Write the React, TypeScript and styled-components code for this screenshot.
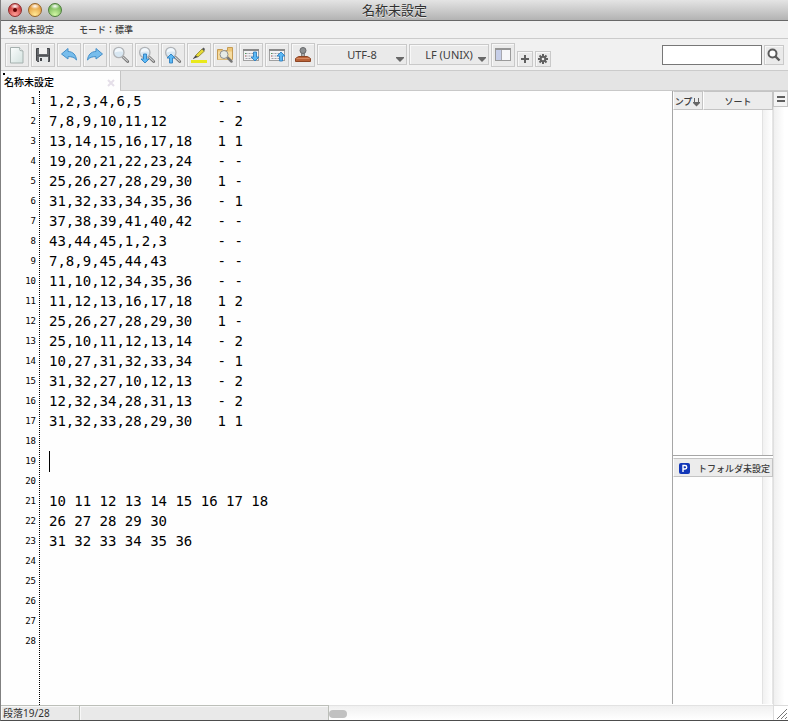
import React from "react";
import styled, { createGlobalStyle } from "styled-components";

const ui = `"Noto Sans", "Noto Sans CJK JP", sans-serif`;
const jp = `"Noto Sans CJK JP", sans-serif`;

const Global = createGlobalStyle`
  * { box-sizing: border-box; }
  html, body, #root { height: 100%; }
  body { margin: 0; background: #fff; font-family: ${jp}; }
  button, input, select, textarea { margin: 0; padding: 0; border-radius: 0; font: inherit; color: inherit; }
  svg { display: block; flex: none; }
`;

const Window = styled.div`
  display: flex;
  flex-direction: column;
  min-height: 100vh;
  background: #fefefe;
  border-left: 1px solid #808080;
  border-bottom: 1px solid #4d4d4d;
`;

const TitleBar = styled.header`
  display: grid;
  grid-template-columns: 1fr auto 1fr;
  align-items: center;
  height: 21px;
  padding: 0 7px;
  border-bottom: 1px solid #686868;
  background: linear-gradient(#e4e4e4, #b3b3b3);
`;

const Lights = styled.div`
  display: flex;
  gap: 6px;
`;

const Light = styled.button<{ $edge: string; $base: string; $glow: string }>`
  display: grid;
  place-items: center;
  width: 14px;
  height: 14px;
  border: 1px solid ${(p) => p.$edge};
  border-radius: 50%;
  background: radial-gradient(ellipse 5px 3px at 50% 18%, #fff, transparent),
    radial-gradient(circle at 50% 90%, ${(p) => p.$glow}, ${(p) => p.$base} 75%);
`;

const Dot = styled.span`
  width: 4px;
  height: 4px;
  border-radius: 50%;
  background: #5d0000;
`;

const Title = styled.h1`
  margin: 0;
  color: #303030;
  font-size: 13px;
  font-weight: 400;
  line-height: 20px;
  text-shadow: 0 1px 0 #e6e6e6;
`;

const MenuBar = styled.nav`
  display: flex;
  gap: 25px;
  height: 18px;
  padding: 0 8px;
  background: #f1f1f1;
  border-bottom: 1px solid #cbcbcb;
`;

const MenuItem = styled.button`
  border: 0;
  background: none;
  color: #3c3c3c;
  font-size: 9px;
  font-weight: 500;
  line-height: 18px;
`;

const ToolBar = styled.div`
  display: flex;
  align-items: center;
  gap: 2px;
  height: 32px;
  padding: 0 4px;
  background: #f1f1f1;
  border-bottom: 1px solid #cbcbcb;
`;

const ToolButton = styled.button`
  display: grid;
  flex: none;
  place-items: center;
  width: 24px;
  height: 24px;
  border: 1px solid #c9c9c9;
  background: #eaeaea;
  box-shadow: inset 1px 1px #f8f8f8;
`;

const SmallButton = styled(ToolButton)`
  align-self: flex-end;
  width: 16px;
  height: 16px;
  margin-bottom: 3px;
`;

const SearchButton = styled(ToolButton)`
  width: 20px;
  height: 20px;
`;

const SelectBox = styled.label<{ $width: number }>`
  position: relative;
  flex: 0 1 ${(p) => p.$width}px;
`;

const Select = styled.select`
  display: block;
  width: 100%;
  height: 21px;
  border: 1px solid #c9c9c9;
  background: #eaeaea;
  box-shadow: inset 1px 1px #f8f8f8;
  color: #404040;
  font-family: ${ui};
  font-size: 11px;
  text-align-last: center;
  appearance: none;
`;

const SelectArrow = styled.svg`
  position: absolute;
  right: 3px;
  bottom: 3px;
  pointer-events: none;
`;

const Search = styled.form`
  display: flex;
  gap: 2px;
  margin-left: auto;
`;

const SearchInput = styled.input`
  width: 100px;
  height: 20px;
  padding: 0 4px;
  border: 1px solid #777;
  background: #fff;
  font-size: 11px;
`;

const TabBar = styled.div`
  display: flex;
  height: 20px;
  background: #e4e4e4;
`;

const Tab = styled.div`
  display: flex;
  justify-content: space-between;
  width: 119px;
  background: #fefefe;
`;

const TabLabel = styled.button`
  position: relative;
  padding-left: 3px;
  border: 0;
  background: none;
  color: #000;
  font-size: 10px;
  font-weight: 500;
  line-height: 22px;
`;

const ModifiedMark = styled.span`
  position: absolute;
  top: 2px;
  left: 2px;
  width: 2px;
  height: 2px;
  background: #000;
`;

const TabClose = styled.button`
  display: grid;
  place-items: center;
  width: 19px;
  padding-top: 3px;
  border: 0;
  background: none;
`;

const TabRest = styled.div`
  flex: 1;
  border-left: 1px solid #c4c4c4;
  border-bottom: 1px solid #c8c8c8;
`;

const Workspace = styled.main`
  display: flex;
  flex: 1;
`;

const Editor = styled.section`
  display: flex;
  flex: 1;
  min-width: 0;
`;

const Gutter = styled.ol`
  flex: none;
  width: 39px;
  margin: 0;
  padding: 0 3px 0 0;
  border-right: 1px dotted #000;
  list-style: none;
  color: #000;
  font-family: "DejaVu Sans Mono", monospace;
  font-size: 9px;
  line-height: 20px;
  text-align: right;
`;

const Page = styled.div`
  position: relative;
  flex: 1;
`;

const TextArea = styled.textarea`
  display: block;
  width: 100%;
  height: 100%;
  padding: 0 9px;
  border: 0;
  outline: 0;
  background: transparent;
  color: #000;
  font-family: "DejaVu Sans Mono", monospace;
  font-size: 14px;
  line-height: 20px;
  white-space: pre;
  resize: none;
  overflow: hidden;
`;

const Caret = styled.span`
  position: absolute;
  top: 360px;
  left: 9px;
  width: 1px;
  height: 21px;
  background: #000;
`;

const SidePanel = styled.aside`
  display: flex;
  flex: none;
  flex-direction: column;
  width: 101px;
  margin-bottom: 1px;
  border-left: 1px solid #a6a6a6;
`;

const SideHead = styled.div`
  display: flex;
  height: 19px;
`;

const HeadCell = styled.button<{ $width?: number }>`
  display: flex;
  flex: ${(p) => (p.$width ? `0 0 ${p.$width}px` : "1")};
  align-items: center;
  justify-content: center;
  gap: 1px;
  min-width: 0;
  padding-top: 2px;
  overflow: hidden;
  border: 1px solid #c4c4c4;
  border-left-color: #fff;
  background: #ececec;
  color: #3c3c3c;
  font-size: 9px;
  font-weight: 500;
  line-height: 15px;
  white-space: nowrap;
`;

const ProjectCell = styled(HeadCell)`
  gap: 8px;
  padding-left: 3px;
`;

const ListArea = styled.div`
  display: flex;
  flex: 1;
  justify-content: flex-end;
`;

const TopList = styled(ListArea)`
  flex: 0 0 345px;
`;

const Track = styled.div`
  width: 11px;
  border-left: 1px solid #e2e2e2;
  border-right: 1px solid #e6e6e6;
  background: linear-gradient(90deg, #f1f1f1, #fff);
`;

const Splitter = styled.div`
  height: 3px;
  border-top: 1px solid #a6a6a6;
  background: #fff;
`;

const ScrollColumn = styled.div`
  display: flex;
  flex: none;
  flex-direction: column;
  width: 15px;
`;

const SplitButton = styled.button`
  display: grid;
  place-items: center;
  height: 16px;
  border: 1px solid #c4c4c4;
  background: #f4f4f4;
`;

const MainTrack = styled.div`
  flex: 1;
  border-left: 1px solid #e0e0e0;
  background: linear-gradient(90deg, #f0f0f0, #fff 75%);
`;

const StatusBar = styled.footer`
  display: flex;
  height: 15px;
`;

const StatusCell = styled.div<{ $width: number }>`
  flex: 0 0 ${(p) => p.$width}px;
  padding-left: 2px;
  border-top: 1px solid #bcbfb9;
  border-right: 1px solid #bcbfb9;
  background: #e9e9e9;
  box-shadow: inset 1px 1px #f8f8f8;
  color: #303030;
  font-family: ${ui};
  font-size: 10px;
  line-height: 15px;
`;

const HorizontalTrack = styled.div`
  display: flex;
  flex: 1;
  align-items: flex-end;
  padding-bottom: 2px;
  border-top: 1px solid #e2e2e2;
  background: linear-gradient(#f0f0f0, #fff);
`;

const Thumb = styled.div`
  width: 18px;
  height: 8px;
  border-radius: 4px;
  background: #c1c1c1;
`;

const Corner = styled.div`
  width: 15px;
  border-top: 1px solid #dcdcdc;
  border-left: 1px solid #dcdcdc;
  background: #fff;
`;

const lines = [
  "1,2,3,4,6,5         - -",
  "7,8,9,10,11,12      - 2",
  "13,14,15,16,17,18   1 1",
  "19,20,21,22,23,24   - -",
  "25,26,27,28,29,30   1 -",
  "31,32,33,34,35,36   - 1",
  "37,38,39,41,40,42   - -",
  "43,44,45,1,2,3      - -",
  "7,8,9,45,44,43      - -",
  "11,10,12,34,35,36   - -",
  "11,12,13,16,17,18   1 2",
  "25,26,27,28,29,30   1 -",
  "25,10,11,12,13,14   - 2",
  "10,27,31,32,33,34   - 1",
  "31,32,27,10,12,13   - 2",
  "12,32,34,28,31,13   - 2",
  "31,32,33,28,29,30   1 1",
  "",
  "",
  "",
  "10 11 12 13 14 15 16 17 18",
  "26 27 28 29 30",
  "31 32 33 34 35 36",
  "",
  "",
  "",
  "",
  "",
];

const Icon = ({ children }: { children: React.ReactNode }) => (
  <svg width="18" height="18" viewBox="0 0 18 18" aria-hidden="true">
    {children}
  </svg>
);

const Lens = () => (
  <>
    <path d="M11 11l4.700 4.500" stroke="#707070" strokeWidth="2.800" strokeLinecap="round" />
    <path d="M11 11l4.500 4.200" stroke="#d4d4d4" strokeWidth="1.100" strokeLinecap="round" />
    <circle cx="6.800" cy="6.500" r="5.200" fill="#d8e7f2" stroke="#b1b3b6" strokeWidth="1.300" />
    <path d="M2.800 6.600a4 4 0 0 1 8-.6c-2.500-.7-5-.5-8 .6z" fill="#f3f8fc" />
  </>
);

const Arrow = ({ up, x, y }: { up?: boolean; x: number; y: number }) => (
  <path
    d={up ? "M0 4 4 0 8 4H5.500V9H2.500V4z" : "M0 5 4 9 8 5H5.500V0H2.500V5z"}
    transform={`translate(${x} ${y})`}
    fill="#5cb9f5"
    stroke="#2f7fc0"
    strokeWidth=".9"
    strokeLinejoin="round"
  />
);

const Sheet = () => (
  <>
    <rect x="1.500" y="3.500" width="15" height="11" fill="#f2f2f4" stroke="#a0a0a0" />
    <path d="M1 4h16" stroke="#8a8a8a" strokeWidth="2" />
    <path d="M3.500 7.500h10M3.500 10h7M3.500 12.500h8" stroke="#a0a0a8" strokeDasharray="2 1" />
    <path d="M3 7.500h1" stroke="#49a155" />
    <path d="M3 10h1" stroke="#c05757" />
  </>
);

const tools: { name: string; art: React.ReactNode }[] = [
  {
    name: "新規",
    art: (
      <>
        <defs>
          <linearGradient id="paper" x1="0" y1="0" x2="1" y2="1">
            <stop offset="0" stopColor="#fbfdfd" />
            <stop offset="1" stopColor="#d3e2df" />
          </linearGradient>
        </defs>
        <path d="M2.500 1.500h9l3.500 3.500v12H2.500z" fill="url(#paper)" stroke="#a5b0ae" />
        <path d="M11.500 1.500l.5 3 3 .5" fill="#fff" stroke="#a5b0ae" />
      </>
    ),
  },
  {
    name: "保存",
    art: (
      <>
        <path d="M2.500 2.500h13v13h-12l-1-1z" fill="#65686c" stroke="#424448" />
        <rect x="5" y="2" width="8" height="6" fill="#f0f0f0" />
        <path d="M3 9.500h12" stroke="#505256" />
        <rect x="5" y="11" width="9" height="5" fill="#e4e7e8" />
        <rect x="6" y="12" width="2" height="3" fill="#44464a" />
      </>
    ),
  },
  {
    name: "取り消し",
    art: (
      <path
        d="M1.500 8 8 2.500v3c5 0 8 3.500 8.500 8.500-2.200-2.800-5-3.500-8.500-3.300V13z"
        fill="#77bdec"
        stroke="#458fc9"
        strokeLinejoin="round"
      />
    ),
  },
  {
    name: "やり直し",
    art: (
      <path
        d="M16.500 8 10 2.500v3c-5 0-8 3.500-8.500 8.500 2.200-2.800 5-3.500 8.500-3.300V13z"
        fill="#77bdec"
        stroke="#458fc9"
        strokeLinejoin="round"
      />
    ),
  },
  { name: "検索", art: <Lens /> },
  { name: "次を検索", art: <><Lens /><Arrow x={3} y={8} /></> },
  { name: "前を検索", art: <><Lens /><Arrow up x={3} y={8} /></> },
  {
    name: "マーカー",
    art: (
      <>
        <rect x="1" y="14" width="16" height="3" fill="#e9e91c" />
        <path d="M5.500 9.500 12 3l2.500 2L8 11z" fill="#e5d936" stroke="#87812b" strokeWidth=".8" />
        <path d="M5.500 9.500 3 12.500v.5l5-2z" fill="#484848" />
        <path d="m12 3 1.500-1.500 1.500 1.500-1 2z" fill="#555" />
      </>
    ),
  },
  {
    name: "フォルダ検索",
    art: (
      <>
        <path d="M1.500 3.500h5l1 1h4v-3h5v12h-15z" fill="#edc677" stroke="#c59c55" />
        <path d="M2 5.500h14v8H2z" fill="#f6dca0" />
        <path d="m11.500 11.500 4 4" stroke="#777" strokeWidth="2.500" strokeLinecap="round" />
        <circle cx="8" cy="8.500" r="4" fill="#e6ebe6" stroke="#8f8f8f" />
      </>
    ),
  },
  { name: "次のブックマーク", art: <><Sheet /><Arrow x={9} y={6} /></> },
  { name: "前のブックマーク", art: <><Sheet /><Arrow up x={9} y={6} /></> },
  {
    name: "スタンプ",
    art: (
      <>
        <path d="M7.500 6h3v6h-3z" fill="#aaa" stroke="#707070" strokeWidth=".8" />
        <circle cx="9" cy="4.500" r="3" fill="#8d9092" stroke="#68696b" />
        <path d="M4.500 10.500h9l3 2v3h-15v-3z" fill="#b96238" stroke="#8c4524" />
        <path d="M2.500 12.500h13" stroke="#d88a62" />
      </>
    ),
  },
];

const DownMark = () => (
  <SelectArrow width="8" height="5" viewBox="0 0 8 5" aria-hidden="true">
    <path d="M0 0h8v1L4 5 0 1z" fill="#686868" />
  </SelectArrow>
);

export default function App() {
  return (
    <>
      <Global />
      <Window>
        <TitleBar>
          <Lights>
            <Light aria-label="閉じる" $edge="#8d2b2b" $base="#c93b3b" $glow="#ff9d96"><Dot /></Light>
            <Light aria-label="しまう" $edge="#96662b" $base="#e39b3c" $glow="#ffe995" />
            <Light aria-label="拡大" $edge="#4e7d3d" $base="#72b455" $glow="#d3f7a5" />
          </Lights>
          <Title>名称未設定</Title>
        </TitleBar>

        <MenuBar>
          <MenuItem>名称未設定</MenuItem>
          <MenuItem>モード：標準</MenuItem>
        </MenuBar>

        <ToolBar>
          {tools.map((t) => (
            <ToolButton key={t.name} aria-label={t.name}>
              <Icon>{t.art}</Icon>
            </ToolButton>
          ))}
          <SelectBox $width={90}>
            <Select aria-label="文字コード" defaultValue="UTF-8">
              <option>UTF-8</option>
            </Select>
            <DownMark />
          </SelectBox>
          <SelectBox $width={80}>
            <Select aria-label="改行コード" defaultValue="LF (UNIX)">
              <option>LF (UNIX)</option>
            </Select>
            <DownMark />
          </SelectBox>
          <ToolButton aria-label="サイドバー">
            <Icon>
              <rect x="1.500" y="2.500" width="15" height="12" fill="#f6f6f8" stroke="#9a9a9a" />
              <path d="M1 3h16" stroke="#959595" strokeWidth="2" />
              <path d="M2 4h5v10H2z" fill="#c6cee8" />
              <path d="M7.500 4v10" stroke="#a7a7af" />
            </Icon>
          </ToolButton>
          <SmallButton aria-label="追加">
            <svg width="10" height="10" viewBox="0 0 10 10">
              <path d="M5 1v8M1 5h8" stroke="#606060" strokeWidth="2" />
            </svg>
          </SmallButton>
          <SmallButton aria-label="設定">
            <svg width="12" height="12" viewBox="0 0 12 12">
              <path d="M6 1v10M1 6h10M2.500 2.500l7 7M9.500 2.500l-7 7" stroke="#606060" strokeWidth="2" />
              <circle cx="6" cy="6" r="2.300" fill="#eee" stroke="#606060" strokeWidth="2" />
            </svg>
          </SmallButton>
          <Search onSubmit={(e) => e.preventDefault()}>
            <SearchInput type="text" aria-label="検索文字列" />
            <SearchButton aria-label="検索実行">
              <svg width="14" height="14" viewBox="0 0 14 14">
                <circle cx="5.500" cy="5.500" r="4" fill="#fff" stroke="#5c5c5c" strokeWidth="2" />
                <path d="m8.500 8.500 4 4" stroke="#5c5c5c" strokeWidth="2.400" />
              </svg>
            </SearchButton>
          </Search>
        </ToolBar>

        <TabBar>
          <Tab>
            <TabLabel><ModifiedMark />名称未設定</TabLabel>
            <TabClose aria-label="タブを閉じる">
              <svg width="8" height="8" viewBox="0 0 8 8">
                <path d="m1 1 6 6M7 1 1 7" stroke="#e5dfe9" strokeWidth="2" />
              </svg>
            </TabClose>
          </Tab>
          <TabRest />
        </TabBar>

        <Workspace>
          <Editor>
            <Gutter>
              {lines.map((_, i) => <li key={i}>{i + 1}</li>)}
            </Gutter>
            <Page>
              <TextArea aria-label="本文" spellCheck={false} defaultValue={lines.join("\n")} />
              <Caret />
            </Page>
          </Editor>
          <SidePanel>
            <SideHead>
              <HeadCell $width={30}>
                ンプ
                <svg width="8" height="10" viewBox="0 0 8 10" aria-hidden="true">
                  <path d="M1.500 1v5M5.500 1v5" stroke="#666" />
                  <path d="M0 5h7v1L3.500 9.500 0 6z" fill="#666" />
                </svg>
              </HeadCell>
              <HeadCell>ソート</HeadCell>
            </SideHead>
            <TopList><Track /></TopList>
            <Splitter />
            <SideHead>
              <ProjectCell>
                <svg width="11" height="11" viewBox="0 0 11 11" aria-hidden="true">
                  <rect width="11" height="11" rx="2" fill="#1237b8" />
                  <path d="M4 9V2.500h2a1.700 1.700 0 0 1 0 3.500H4" fill="none" stroke="#fff" strokeWidth="1.400" />
                </svg>
                トフォルダ未設定
              </ProjectCell>
            </SideHead>
            <ListArea><Track /></ListArea>
          </SidePanel>
          <ScrollColumn>
            <SplitButton aria-label="分割">
              <svg width="8" height="6" viewBox="0 0 8 6">
                <path d="M0 1h8M0 5h8" stroke="#606060" strokeWidth="2" />
              </svg>
            </SplitButton>
            <MainTrack />
          </ScrollColumn>
        </Workspace>

        <StatusBar>
          <StatusCell $width={79}>段落19/28</StatusCell>
          <StatusCell $width={249} />
          <HorizontalTrack><Thumb /></HorizontalTrack>
          <Corner>
            <svg width="14" height="14" viewBox="0 0 14 14" aria-hidden="true">
              <path d="M3 13 13 3M7 13l6-6M11 13l2-2" stroke="#777" />
            </svg>
          </Corner>
        </StatusBar>
      </Window>
    </>
  );
}
